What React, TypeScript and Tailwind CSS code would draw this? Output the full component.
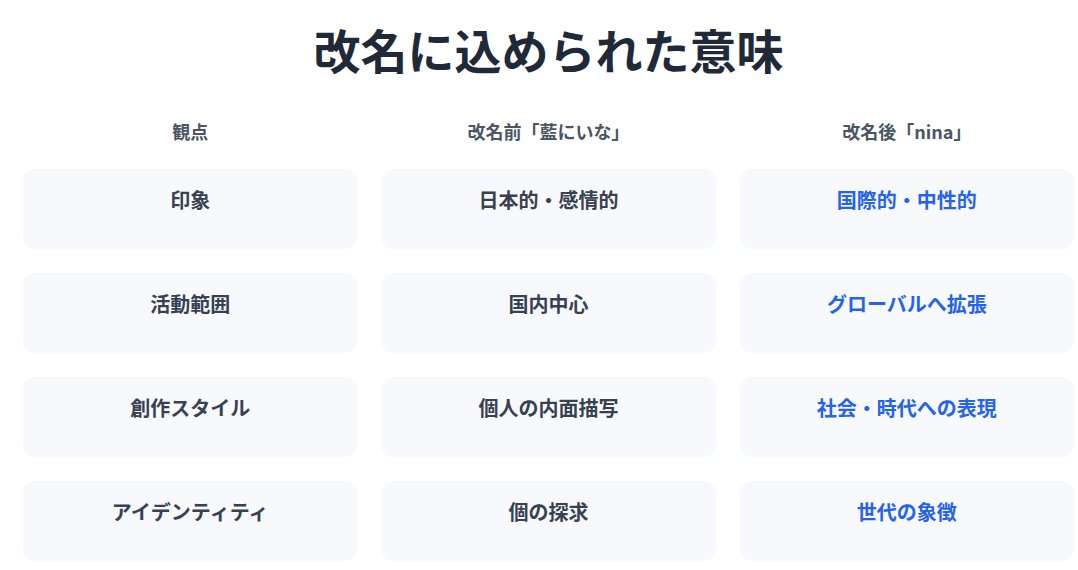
const rows: { label: string; before: string; after: string }[] = [
  { label: "印象", before: "日本的・感情的", after: "国際的・中性的" },
  { label: "活動範囲", before: "国内中心", after: "グローバルへ拡張" },
  { label: "創作スタイル", before: "個人の内面描写", after: "社会・時代への表現" },
  { label: "アイデンティティ", before: "個の探求", after: "世代の象徴" },
];

const columns: string[] = ["観点", "改名前「藍にいな」", "改名後「nina」"];

function Card({ text, accent }: { text: string; accent?: boolean }) {
  return (
    <div className="h-[80px] rounded-xl bg-[#f7f9fc] pt-[17px] text-center">
      <span className={`text-xl font-bold leading-7 ${accent ? "text-[#2563eb]" : "text-[#374151]"}`}>{text}</span>
    </div>
  );
}

export default function App() {
  return (
    <div
      className="min-h-[570px] bg-white"
      style={{ fontFamily: '"Noto Sans CJK JP", "Noto Sans", sans-serif' }}
    >
      <div className="ml-[23px] w-[1051px]">
        <h1 className="pt-[17px] text-center text-[47px] font-bold leading-[64px] text-[#1f2937]">
          改名に込められた意味
        </h1>
        <div className="mt-[36px] grid grid-cols-3 gap-x-6">
          {columns.map((column, index) => (
            <div key={index} className="text-center text-lg font-bold leading-7 text-[#4b5563]">
              {column}
            </div>
          ))}
        </div>
        <div className="mt-[24px] grid grid-cols-3 gap-6">
          {rows.map(row => (
            <>
              <Card key={row.label} text={row.label} />
              <Card key={row.before} text={row.before} />
              <Card key={row.after} text={row.after} accent />
            </>
          ))}
        </div>
      </div>
    </div>
  );
}
